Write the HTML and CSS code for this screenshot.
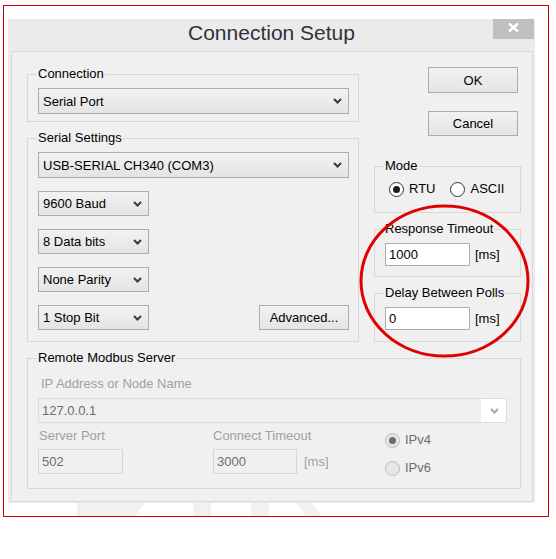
FILE: index.html
```html
<!DOCTYPE html>
<html lang="en">
<head>
<meta charset="utf-8">
<title>Connection Setup</title>
<link rel="stylesheet" href="styles.css">
</head>
<body>
<div class="frame">
  <div class="window">
    <div class="titlebar">
      <span class="spacer"></span>
      <h1 class="title">Connection Setup</h1>
      <button class="close" type="button" aria-label="Close">
        <svg class="close-x" width="11" height="9" viewBox="0 0 11 9"><path d="M1 0.5L10 8.5M10 0.5L1 8.5" stroke="#fff" stroke-width="2.4" fill="none"/></svg>
      </button>
    </div>
    <div class="client">
      <div class="top">
        <div class="left">
          <fieldset class="group g-conn">
            <legend>Connection</legend>
            <div class="combo wide"><span>Serial Port</span><svg class="chev" width="9" height="6" viewBox="0 0 9 6"><path d="M1 1l3.5 3.5L8 1"/></svg></div>
          </fieldset>
          <fieldset class="group g-serial">
            <legend>Serial Settings</legend>
            <div class="stack">
              <div class="combo wide tall"><span>USB-SERIAL CH340 (COM3)</span><svg class="chev" width="9" height="6" viewBox="0 0 9 6"><path d="M1 1l3.5 3.5L8 1"/></svg></div>
              <div class="combo small"><span>9600 Baud</span><svg class="chev" width="9" height="6" viewBox="0 0 9 6"><path d="M1 1l3.5 3.5L8 1"/></svg></div>
              <div class="combo small"><span>8 Data bits</span><svg class="chev" width="9" height="6" viewBox="0 0 9 6"><path d="M1 1l3.5 3.5L8 1"/></svg></div>
              <div class="combo small"><span>None Parity</span><svg class="chev" width="9" height="6" viewBox="0 0 9 6"><path d="M1 1l3.5 3.5L8 1"/></svg></div>
              <div class="last-row">
                <div class="combo small"><span>1 Stop Bit</span><svg class="chev" width="9" height="6" viewBox="0 0 9 6"><path d="M1 1l3.5 3.5L8 1"/></svg></div>
                <button class="btn adv" type="button">Advanced...</button>
              </div>
            </div>
          </fieldset>
        </div>
        <div class="right">
          <button class="btn ok" type="button">OK</button>
          <button class="btn cancel" type="button">Cancel</button>
          <fieldset class="group g-mode">
            <legend>Mode</legend>
            <div class="radios">
              <span class="radio on"><span class="dot"></span>RTU</span>
              <span class="radio"><span class="dot"></span>ASCII</span>
            </div>
          </fieldset>
          <fieldset class="group g-resp">
            <legend>Response Timeout</legend>
            <div class="field-row"><span class="edit">1000</span><span class="unit">[ms]</span></div>
          </fieldset>
          <fieldset class="group g-delay">
            <legend>Delay Between Polls</legend>
            <div class="field-row"><span class="edit">0</span><span class="unit">[ms]</span></div>
          </fieldset>
        </div>
      </div>
      <fieldset class="group g-remote">
        <legend>Remote Modbus Server</legend>
        <div class="dis-label ip-label">IP Address or Node Name</div>
        <div class="dcombo"><span class="dcombo-text">127.0.0.1</span><span class="dcombo-btn"><svg class="chev dis" width="9" height="6" viewBox="0 0 9 6"><path d="M1 1l3.5 3.5L8 1"/></svg></span></div>
        <div class="bottom-grid">
          <div class="col">
            <div class="dis-label port-label">Server Port</div>
            <span class="dedit">502</span>
          </div>
          <div class="col">
            <div class="dis-label">Connect Timeout</div>
            <div class="field-row"><span class="dedit narrow">3000</span><span class="unit dis-unit">[ms]</span></div>
          </div>
          <div class="col ipcol">
            <span class="radio disabled on ipv4"><span class="dot"></span>IPv4</span>
            <span class="radio disabled ipv6"><span class="dot"></span>IPv6</span>
          </div>
        </div>
      </fieldset>
    </div>
  </div>
  <svg class="watermark" width="527" height="13" viewBox="0 0 527 13">
    <polygon points="69,0 137,0 127,13 69,13"/>
    <rect x="185" y="0" width="18" height="13"/>
    <rect x="243" y="0" width="18" height="13"/>
    <polygon points="288,0 304,0 314,13 298,13"/>
  </svg>
  <svg class="ring" width="180" height="160" viewBox="0 0 180 160">
    <ellipse cx="90.5" cy="80" rx="83.5" ry="75" fill="none" stroke="#e00000" stroke-width="3"/>
  </svg>
</div>
</body>
</html>
```

FILE: styles.css
```css
body {
  margin: 0;
  background: #fff;
  font-family: "Liberation Sans", Arial, sans-serif;
  font-size: 13px;
  color: #000;
}

.frame {
  position: relative;
  margin: 5px 0 0 3px;
  width: 546px;
  height: 512px;
  box-sizing: border-box;
  border: 1px solid #d40000;
  padding: 13px 0 0 4px;
}

.window {
  width: 527px;
  height: 484px;
  background: #ebebeb;
}

.titlebar {
  display: grid;
  grid-template-columns: 1fr auto 1fr;
  height: 32px;
}

.title {
  margin: 0;
  font-weight: normal;
  font-size: 21px;
  line-height: 28px;
  color: #2e3338;
  white-space: nowrap;
}

.close {
  justify-self: end;
  align-self: start;
  width: 41px;
  height: 20px;
  margin-right: 1px;
  border: 0;
  padding: 0 0 3px;
  background: #c0c0c0;
  display: flex;
  align-items: center;
  justify-content: center;
}

.client {
  margin-left: 3px;
  width: 522px;
  height: 451px;
  box-sizing: border-box;
  border: 1px solid #d9d9d9;
  background: #f0f0f0;
  padding: 14px 11px 0 15px;
}

.top {
  display: grid;
  grid-template-columns: 332px 147px;
  column-gap: 15px;
  align-items: start;
}

.left {
  display: flex;
  flex-direction: column;
  gap: 8px;
}

.group {
  margin: 0;
  min-width: 0;
  border: 1px solid #d8d8d8;
  padding: 6px 9px 7px 10px;
}

.group legend {
  padding: 0 1px;
  margin-left: -1px;
  line-height: 16px;
  font-size: 13px;
  color: #000;
}

.g-serial {
  padding-bottom: 11px;
}

.stack {
  display: flex;
  flex-direction: column;
  gap: 13px;
}

.combo {
  display: flex;
  align-items: center;
  justify-content: space-between;
  box-sizing: border-box;
  height: 25px;
  border: 1px solid #acacac;
  background: linear-gradient(#f2f2f2, #e4e4e4);
  padding: 0 6px 0 4px;
  white-space: nowrap;
}

.combo.wide {
  height: 26px;
}

.combo.small {
  width: 111px;
}

.chev {
  flex: none;
}

.chev path {
  fill: none;
  stroke: #3a3a3a;
  stroke-width: 2;
}

.chev.dis path {
  stroke: #a6a6a6;
}

.last-row {
  display: flex;
  justify-content: space-between;
  align-items: center;
}

.btn {
  box-sizing: border-box;
  height: 25px;
  width: 90px;
  border: 1px solid #acacac;
  background: linear-gradient(#f2f2f2, #e4e4e4);
  font-family: inherit;
  font-size: 13px;
  color: #000;
  padding: 0;
}

.right {
  display: flex;
  flex-direction: column;
}

.ok {
  align-self: flex-end;
  margin: 1px 3px 0 0;
  height: 26px;
}

.cancel {
  align-self: flex-end;
  margin: 18px 3px 0 0;
}

.g-mode {
  margin-top: 22px;
  padding: 7px 10px 15px;
}

.g-resp {
  margin-top: 8px;
  padding: 6px 10px 10px;
}

.g-delay {
  margin-top: 8px;
  padding: 6px 10px 11px;
}

.radios {
  display: flex;
  align-items: center;
  gap: 15px;
  padding-left: 4px;
}

.radio {
  display: flex;
  align-items: center;
  gap: 5px;
  height: 16px;
  line-height: 16px;
  white-space: nowrap;
}

.radio .dot {
  flex: none;
  box-sizing: border-box;
  width: 15px;
  height: 15px;
  border-radius: 50%;
  border: 1px solid #333;
  background: #fff;
  display: flex;
  align-items: center;
  justify-content: center;
}

.radio.on .dot::after {
  content: "";
  width: 7px;
  height: 7px;
  border-radius: 50%;
  background: #1a1a1a;
}

.radio.disabled {
  color: #6d6d6d;
}

.radio.disabled .dot {
  border-color: #bcbcbc;
  background: #e6e6e6;
}

.radio.disabled.on .dot::after {
  background: #6d6d6d;
}

.field-row {
  display: flex;
  align-items: center;
}

.edit {
  box-sizing: border-box;
  width: 85px;
  height: 23px;
  line-height: 21px;
  border: 1px solid #acacac;
  background: #fff;
  padding-left: 3px;
}

.unit {
  margin-left: 5px;
}

.g-remote {
  margin-top: 8px;
  padding: 10px 13px 12px 10px;
}

.dis-label {
  color: #a0a0a0;
  line-height: 16px;
  white-space: nowrap;
}

.ip-label {
  margin-left: 3px;
}

.port-label {
  margin-left: 1px;
}

.dcombo {
  margin-top: 6px;
  display: flex;
  box-sizing: border-box;
  height: 25px;
  border: 1px solid #dcdcdc;
  background: #fff;
}

.dcombo-text {
  flex: 1;
  background: #efefef;
  color: #6d6d6d;
  line-height: 23px;
  padding-left: 3px;
}

.dcombo-btn {
  width: 23px;
  display: flex;
  align-items: center;
  justify-content: center;
  padding-left: 2px;
}

.bottom-grid {
  margin-top: 5px;
  display: grid;
  grid-template-columns: 175px 172px 1fr;
}

.col {
  display: flex;
  flex-direction: column;
  align-items: flex-start;
}

.col .field-row,
.col .dedit {
  margin-top: 5px;
}

.dedit {
  box-sizing: border-box;
  width: 85px;
  height: 25px;
  line-height: 23px;
  border: 1px solid #d6d6d6;
  background: #f0f0f0;
  color: #6d6d6d;
  padding-left: 3px;
}

.col .field-row .dedit {
  margin-top: 0;
}

.dedit.narrow {
  width: 84px;
}

.dis-unit {
  margin-left: 7px;
  color: #a0a0a0;
}

.ipv4 {
  margin-top: 4px;
}

.ipv6 {
  margin-top: 12px;
}

.watermark {
  display: block;
  margin-left: 0;
}

.watermark polygon,
.watermark rect {
  fill: #f1f1f1;
}

.ring {
  position: absolute;
  left: 350px;
  top: 195px;
}
```
